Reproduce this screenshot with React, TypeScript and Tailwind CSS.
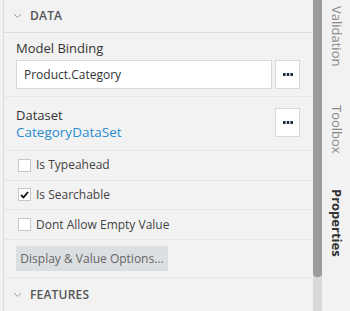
import React from "react";

const font = { fontFamily: '"Open Sans", "Noto Sans", sans-serif' };

function Chevron() {
  return (
    <svg width="9" height="6" viewBox="0 0 9 6" className="shrink-0">
      <polyline points="1,1 4.5,4.5 8,1" fill="none" stroke="#9a9a9a" strokeWidth="1" />
    </svg>
  );
}

function Dots() {
  return (
    <svg width="10" height="3" viewBox="0 0 10 3">
      <rect x="0" y="0" width="2.6" height="3" fill="#1f2d44" />
      <rect x="3.7" y="0" width="2.6" height="3" fill="#1f2d44" />
      <rect x="7.4" y="0" width="2.6" height="3" fill="#1f2d44" />
    </svg>
  );
}

function Check({ checked, label }: { checked?: boolean; label: string }) {
  return (
    <div className="flex h-[30px] items-center border-b border-[#e6e6e6] pl-[14px]">
      <div className="flex h-[13px] w-[13px] items-center justify-center border border-[#c8c8c8] bg-white">
        {checked && (
          <svg width="9" height="8" viewBox="0 0 9 8">
            <polyline points="1,4 3.5,6.5 8,1" fill="none" stroke="#111" strokeWidth="1.8" />
          </svg>
        )}
      </div>
      <span className="ml-[5px] text-[12px] text-[#444]">{label}</span>
    </div>
  );
}

export default function App() {
  return (
    <div className="flex h-[311px] w-[350px] overflow-hidden bg-[#f2f2f2]" style={font}>
      <div className="ml-[3px] flex w-[310px] flex-col border-l border-[#dcdcdc]">
        <div className="flex h-[33px] shrink-0 items-center gap-[8px] border-b border-[#dedede] pl-[9px]">
          <Chevron />
          <span className="text-[12px] font-semibold tracking-[0.2px] text-[#555]">DATA</span>
        </div>
        <div className="border-b border-[#e8e8e8] pb-[7px] pl-[12px] pr-[13px] pt-[5px]">
          <div className="h-[22px] text-[13px] leading-[20px] text-[#333]">Model Binding</div>
          <div className="flex gap-[3px]">
            <div className="flex h-[29px] flex-1 items-center border border-[#d8d8d8] bg-white pl-[7px] text-[12px] text-[#333]">
              Product.Category
            </div>
            <div className="flex h-[29px] w-[25px] items-center justify-center border border-[#d8d8d8] bg-white">
              <Dots />
            </div>
          </div>
        </div>
        <div className="flex h-[54px] items-center border-b border-[#e8e8e8] pl-[12px] pr-[13px]">
          <div className="flex flex-1 flex-col pt-[2px]">
            <span className="text-[13px] leading-[16px] text-[#333]">Dataset</span>
            <span className="text-[13.5px] leading-[18px] text-[#2a8ccf]">CategoryDataSet</span>
          </div>
          <div className="mb-[2px] flex h-[29px] w-[25px] items-center justify-center border border-[#d8d8d8] bg-white">
            <Dots />
          </div>
        </div>
        <Check label="Is Typeahead" />
        <Check checked label="Is Searchable" />
        <Check label="Dont Allow Empty Value" />
        <div className="flex h-[38px] items-center border-b border-[#e8e8e8] pl-[12px]">
          <div className="flex h-[25px] w-[152px] items-center justify-center bg-[#dcdfe1] text-[12px] text-[#666]">
            Display &amp; Value Options...
          </div>
        </div>
        <div className="flex h-[33px] shrink-0 items-center gap-[8px] pl-[9px]">
          <Chevron />
          <span className="text-[12px] font-semibold tracking-[0.2px] text-[#555]">FEATURES</span>
        </div>
      </div>
      <div className="flex w-[9px] flex-col bg-[#d9d9d9]">
        <div className="h-[277px] rounded-b-[4px] bg-[#9b9b9b]" />
      </div>
      <div className="flex flex-1 flex-col items-center bg-[#f2f2f2] pt-[6px]">
        <div className="text-[13px] text-[#8a8a8a]" style={{ writingMode: "vertical-rl" }}>Validation</div>
        <div className="mt-[39px] text-[13px] text-[#8a8a8a]" style={{ writingMode: "vertical-rl" }}>Toolbox</div>
        <div className="mt-[35px] text-[13px] font-bold text-[#333]" style={{ writingMode: "vertical-rl" }}>Properties</div>
      </div>
    </div>
  );
}
